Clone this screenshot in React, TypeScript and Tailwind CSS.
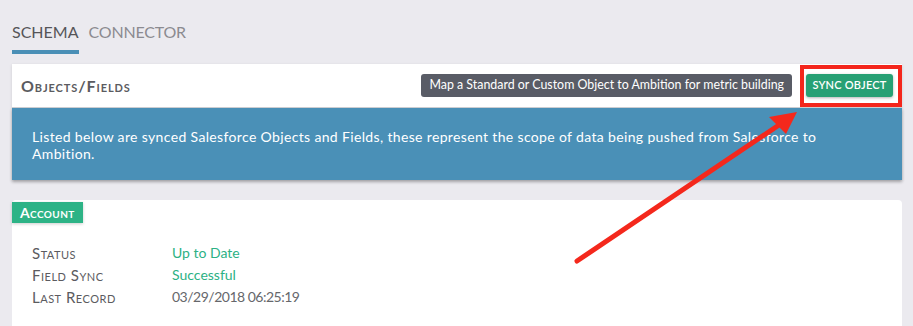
import React from "react";

const rows = [
  { label: "Status", value: "Up to Date", tone: "text-[#2cb184]" },
  { label: "Field Sync", value: "Successful", tone: "text-[#2cb184]" },
  { label: "Last Record", value: "03/29/2018 06:25:19", tone: "text-[#66676b] tracking-[-0.5px]" },
];

export default function App() {
  return (
    <div className="relative h-[326px] overflow-hidden bg-[#ebeaef] px-3 font-['Lato',sans-serif]">
      {/* tabs */}
      <div className="flex gap-[10px] pt-5">
        <div className="border-b-4 border-[#4a8fb6] pb-[6px] text-[16px] leading-6 text-[#555558]">SCHEMA</div>
        <div className="border-b-4 border-transparent pb-[6px] text-[16px] leading-6 tracking-[-0.2px] text-[#8b8b90]">CONNECTOR</div>
      </div>

      {/* objects / fields card */}
      <div className="mt-[10px] w-[890px] shadow-[0_1px_3px_rgba(0,0,0,0.12)]">
        <div className="flex h-[44px] items-center border-b border-[#cfd0d4] bg-white pl-[9px] pr-[9px]">
          <div className="flex-1 text-[16px] font-bold tracking-[0.9px] text-[#5b5b60] [font-variant:small-caps]">Objects/Fields</div>
          <div className="flex h-[23px] items-center rounded-[3px] bg-[#595c66] px-[8px] text-[12.4px] text-white">
            Map a Standard or Custom Object to Ambition for metric building
          </div>
          <div className="relative ml-[14px]">
            <button className="flex h-[23px] w-[87px] items-center justify-center rounded-[3px] bg-[#27a074] text-[11px] font-semibold tracking-[0.2px] text-white shadow-[0_1px_3px_rgba(0,0,0,0.3)]">
              SYNC OBJECT
            </button>
            <div className="pointer-events-none absolute -top-[9px] -bottom-[10px] -left-[6px] -right-[9px] border-4 border-[#f4261c]" />
          </div>
        </div>
        <div className="bg-[#4a90b7] pl-5 pr-[40px] pt-5 pb-[18px] text-[14px] leading-[17px] tracking-[0.35px] text-white shadow-[0_2px_3px_rgba(0,0,0,0.25)]">
          Listed below are synced Salesforce Objects and Fields, these represent the scope of data being pushed from Salesforce to Ambition.
        </div>
      </div>

      {/* account card */}
      <div className="mt-5 h-[200px] w-[890px] rounded-sm bg-white">
        <div className="inline-flex h-[21px] items-center bg-[#2db386] px-[8px] text-[14px] font-bold tracking-[0.4px] text-white shadow-[0_1px_3px_rgba(0,0,0,0.2)] [font-variant:small-caps]">
          Account
        </div>
        <div className="pl-5 pt-[18px]">
          {rows.map((r) => (
            <div key={r.label} className="flex text-[14px] leading-[22px]">
              <div className="w-[140px] text-[15px] tracking-[0.5px] text-[#5b5b60] [font-variant:small-caps]">{r.label}</div>
              <div className={r.tone}>{r.value}</div>
            </div>
          ))}
        </div>
      </div>

      {/* annotation arrow */}
      <svg className="pointer-events-none absolute left-0 top-0" width="913" height="326" viewBox="0 0 913 326">
        <line x1="577" y1="261" x2="779" y2="125" stroke="#f4281c" strokeWidth="5" strokeLinecap="round" />
        <polygon points="797,112 769,117 786,134" fill="#f4281c" />
      </svg>
    </div>
  );
}
